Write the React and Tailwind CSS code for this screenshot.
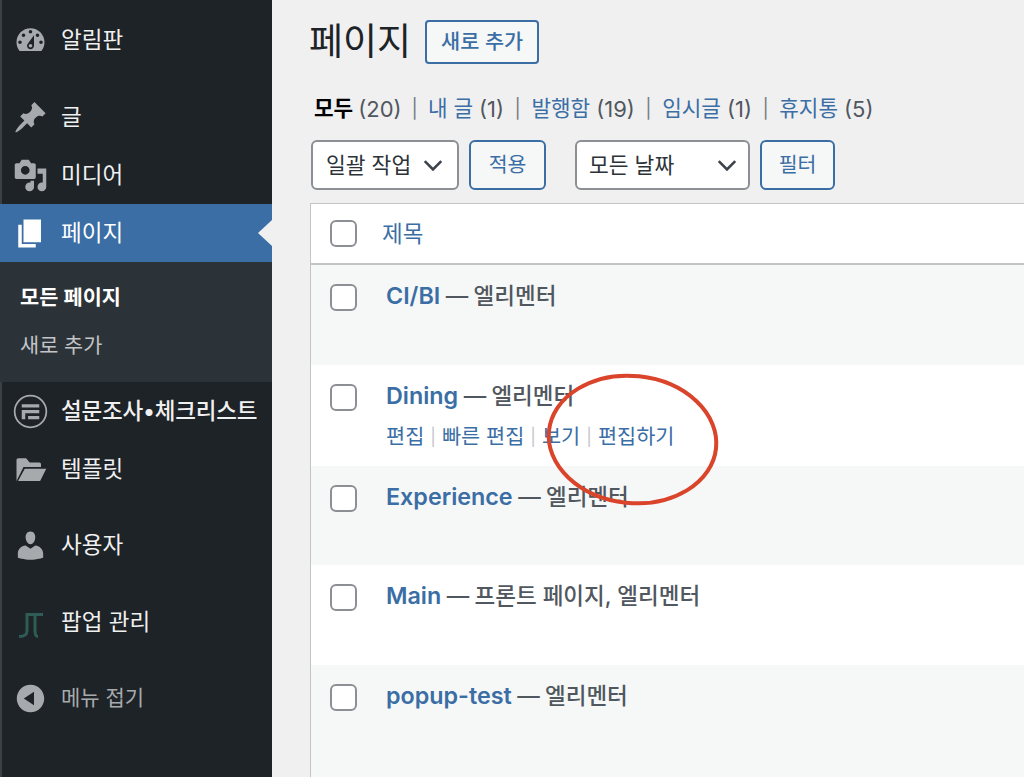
import React from "react";

const I = ({ d, cls = "" }) => (
  <svg viewBox="0 0 20 20" className={`w-[35px] h-[35px] shrink-0 ${cls}`} fill="currentColor">
    <path d={d} />
  </svg>
);

const icons = {
  dash: "M3.76 16h12.48c1.1-1.37 1.76-3.11 1.76-5 0-4.42-3.58-8-8-8s-8 3.58-8 8c0 1.89.66 3.63 1.76 5zM10 4c.55 0 1 .45 1 1s-.45 1-1 1-1-.45-1-1 .45-1 1-1zM6 6c.55 0 1 .45 1 1s-.45 1-1 1-1-.45-1-1 .45-1 1-1zm8 0c.55 0 1 .45 1 1s-.45 1-1 1-1-.45-1-1 .45-1 1-1zm-5.37 5.55L12 7v6c0 1.1-.9 2-2 2s-2-.9-2-2c0-.57.24-1.08.63-1.45zM4 10c.55 0 1 .45 1 1s-.45 1-1 1-1-.45-1-1 .45-1 1-1zm12 0c.55 0 1 .45 1 1s-.45 1-1 1-1-.45-1-1 .45-1 1-1zm-5 3c0-.55-.45-1-1-1s-1 .45-1 1 .45 1 1 1 1-.45 1-1z",
  pin: "M10.44 3.02l1.82-1.82 6.36 6.35-1.83 1.82c-1.05-.68-2.48-.57-3.41.36l-.75.75c-.92.93-1.04 2.35-.35 3.41l-1.83 1.82-2.41-2.41-2.8 2.79c-.42.42-3.38 2.71-3.8 2.29s1.86-3.39 2.28-3.81l2.79-2.79L4.1 9.36l1.83-1.82c1.05.69 2.48.57 3.4-.36l.75-.75c.93-.92 1.05-2.35.36-3.41z",
  media: "M13 11V4c0-.55-.45-1-1-1h-1.67L9 1H5L3.67 3H2c-.55 0-1 .45-1 1v7c0 .55.45 1 1 1h10c.55 0 1-.45 1-1zM7 4.5c1.38 0 2.5 1.12 2.5 2.5S8.38 9.5 7 9.5 4.5 8.38 4.5 7 5.62 4.5 7 4.5zM14 6h5v10.5c0 1.38-1.12 2.5-2.5 2.5S14 17.88 14 16.5s1.12-2.5 2.5-2.5c.17 0 .34.02.5.05V9h-3V6zm-4 8.05V13h2v3.5c0 1.38-1.12 2.5-2.5 2.5S7 17.88 7 16.5 8.12 14 9.5 14c.17 0 .34.02.5.05z",
  page: "M6 15V2h10v13H6zm-1 1h8v2H3V5h2v11z",
  folder: "M2 16.5V4.5c0-.55.45-1 1-1h4.5L9.5 6H15c.55 0 1 .45 1 1v1.5H6L2 16.5zM6.7 9.5H19L15.5 16.5H2.9L6.7 9.5z",
  user: "M10 9.25c-2.27 0-2.73-3.44-2.73-3.44C7 4.02 7.82 2 9.97 2c2.16 0 2.98 2.02 2.71 3.81 0 0-.41 3.44-2.68 3.44zm0 2.57L12.72 10c2.39 0 4.52 2.33 4.52 4.53v2.49s-3.65 1.13-7.24 1.13c-3.65 0-7.24-1.13-7.24-1.13v-2.49c0-2.25 1.94-4.48 4.47-4.48z",
  collapse: "M10 2.16c4.33 0 7.84 3.51 7.84 7.84s-3.51 7.84-7.84 7.84S2.16 14.33 2.16 10 5.67 2.16 10 2.16zM12 13.88V6.12L6.18 10z",
};

const Forminator = () => (
  <svg viewBox="0 0 36 36" className="w-[35px] h-[35px] shrink-0" fill="none" stroke="currentColor">
    <circle cx="18" cy="18" r="16.3" strokeWidth="1.8" />
    <path d="M9 10.5h18v3.4H9zM9 16.5h18v3.4H12.6V26H9zM15.5 22.5H27V26H15.5z" fill="currentColor" stroke="none" />
  </svg>
);

const JT = () => (
  <svg viewBox="0 0 35 35" className="w-[35px] h-[35px] shrink-0" fill="none" stroke="#2f5c57" strokeWidth="3">
    <path d="M6 31.500c5 0 8-1 8-6V9.500H30M22 9.500V25c0 4 1 6.500 3 6.500" />
  </svg>
);

const NavItem = ({ icon, children, mt = "", dim = false }) => (
  <div className={`flex items-center h-[58px] pl-[11px] ${mt} ${dim ? "text-[#a7aaad]" : "text-[#f0f0f1]"}`}>
    <div className="text-[#a7aaad] flex">{icon}</div>
    <span className={`ml-[13px] whitespace-nowrap ${dim ? "text-[21px]" : "text-[22.500px]"}`}>{children}</span>
  </div>
);

const Box = ({ cls = "" }) => (
  <span className={`block w-[27px] h-[27px] rounded-[6px] border-2 border-[#8c8f94] bg-white shrink-0 ${cls}`} />
);

const Row = ({ name, state, actions, white, h }) => (
  <div className={`flex pl-[19px] pt-[16px] ${h} ${white ? "bg-white" : "bg-[#f6f7f7]"}`}>
    <Box cls="mt-[3px]" />
    <div className="ml-[29px]">
      <div className="text-[22.500px] leading-[30px] whitespace-nowrap text-[#50575e] h-[30px]">
        <span className="font-semibold text-[#3a6ea5] text-[23.300px]">{name}</span>
        <span className="font-medium tracking-[-0.4px]"> — </span>
        <span className="font-medium">{state}</span>
      </div>
      {actions && (
        <div className="flex items-center mt-[13px] text-[20.800px] leading-[26px] text-[#3a6ea5] whitespace-nowrap">
          <span>편집</span>
          <span className="mx-[6px] text-[#c3c4c7] text-[17px]">|</span>
          <span>빠른 편집</span>
          <span className="mx-[6px] text-[#c3c4c7] text-[17px]">|</span>
          <span>보기</span>
          <span className="mx-[6px] text-[#c3c4c7] text-[17px]">|</span>
          <span>편집하기</span>
        </div>
      )}
    </div>
  </div>
);

const Chev = () => (
  <svg viewBox="0 0 20 20" className="w-[22px] h-[22px]" fill="none" stroke="#3c434a" strokeWidth="2.400">
    <path d="M2.500 6.500 10 14l7.500-7.500" />
  </svg>
);

const Sep = ({ cls = "mx-[10.500px]" }) => <span className={`text-[#787c82] text-[19px] ${cls}`}>|</span>;
const Count = ({ children, cls = "ml-[6px]" }) => <span className={`text-[#50575e] text-[22px] ${cls}`}>{children}</span>;

export default function App() {
  return (
    <div
      className="relative flex w-[1024px] h-[777px] overflow-hidden bg-[#f0f0f1]"
      style={{ fontFamily: '"Inter", "Noto Sans CJK KR", sans-serif' }}
    >
      {/* Sidebar */}
      <aside className="w-[272px] h-full shrink-0 bg-[#1d2327] border-l-2 border-[#3b4045] pt-[11px]">
        <NavItem icon={<I d={icons.dash} />}>알림판</NavItem>
        <NavItem icon={<I d={icons.pin} />} mt="mt-[19px]">글</NavItem>
        <NavItem icon={<I d={icons.media} />}>미디어</NavItem>
        <div className="relative flex items-center h-[58px] -ml-[2px] pl-[13px] bg-[#3a6ea5] text-white">
          <I d={icons.page} />
          <span className="ml-[13px] text-[22.500px]">페이지</span>
          <span className="absolute right-0 top-[16px] w-0 h-0 border-y-[13px] border-y-transparent border-r-[14px] border-r-[#f0f0f1]" />
        </div>
        <div className="h-[120px] bg-[#2c3338] pl-[20px] -ml-[2px] text-[20.800px] flex flex-col">
          <span className="mt-[21px] leading-[30px] font-semibold text-white">모든 페이지</span>
          <span className="mt-[18px] leading-[30px] text-[#c3c4c7]">새로 추가</span>
        </div>
        <NavItem icon={<Forminator />}>
          <span className="font-medium tracking-[-0.2px]">설문조사•체크리스트</span>
        </NavItem>
        <NavItem icon={<I d={icons.folder} />}>템플릿</NavItem>
        <NavItem icon={<I d={icons.user} />} mt="mt-[18px]">사용자</NavItem>
        <NavItem icon={<JT />} mt="mt-[19px]">팝업 관리</NavItem>
        <NavItem icon={<I d={icons.collapse} />} mt="mt-[18px]" dim>메뉴 접기</NavItem>
      </aside>

      {/* Main */}
      <main className="flex-1 min-w-0 h-full pl-[38px] flex flex-col">
        <div className="flex items-center shrink-0 h-[40px] mt-[22px]">
          <h1 className="-ml-[1px] text-[37px] leading-[40px] text-[#1d2327] font-normal">페이지</h1>
          <span className="ml-[14px] w-[114px] h-[44px] flex items-center justify-center rounded-[4px] border-2 border-[#3a6ea5] bg-[#f6f7f7] text-[#3a6ea5] text-[20.800px] font-medium">
            새로 추가
          </span>
        </div>

        <div className="flex items-center shrink-0 h-[30px] mt-[32px] ml-[4px] text-[21.300px] text-[#3a6ea5] whitespace-nowrap">
          <span className="font-bold text-black">모두</span>
          <Count cls="ml-[5px]">(20)</Count>
          <Sep cls="mx-[10px]" />
          <span>내 글</span>
          <Count>(1)</Count>
          <Sep />
          <span>발행함</span>
          <Count>(19)</Count>
          <Sep />
          <span>임시글</span>
          <Count>(1)</Count>
          <Sep />
          <span>휴지통</span>
          <Count>(5)</Count>
        </div>

        <div className="flex items-center shrink-0 mt-[16px] ml-[1px] h-[50px] text-[21.500px]">
          <div className="w-[148px] h-full flex items-center justify-between pl-[13px] pr-[13px] rounded-[6px] border-2 border-[#8c8f94] bg-white text-[#2c3338]">
            <span className="whitespace-nowrap">일괄 작업</span>
            <Chev />
          </div>
          <div className="ml-[10px] w-[77px] h-full flex items-center justify-center rounded-[6px] border-2 border-[#3a6ea5] bg-[#f6f7f7] text-[#3a6ea5] text-[20.500px]">적용</div>
          <div className="ml-[29px] w-[175px] h-full flex items-center justify-between pl-[12px] pr-[10px] rounded-[6px] border-2 border-[#8c8f94] bg-white text-[#2c3338]">
            <span className="whitespace-nowrap">모든 날짜</span>
            <Chev />
          </div>
          <div className="ml-[10px] w-[75px] h-full flex items-center justify-center rounded-[6px] border-2 border-[#3a6ea5] bg-[#f6f7f7] text-[#3a6ea5] text-[20.500px]">필터</div>
        </div>

        <div className="mt-[13px] -mr-[4px] border-t border-l border-[#c3c4c7] flex-1 min-h-0">
          <div className="flex items-center h-[61px] pl-[19px] bg-white border-b-2 border-[#c3c4c7]">
            <Box />
            <span className="ml-[25px] text-[#3a6ea5] text-[22.500px] leading-[30px] mt-[1px]">제목</span>
          </div>
          <Row name="CI/BI" state="엘리멘터" h="h-[100px]" />
          <Row name="Dining" state="엘리멘터" actions white h="h-[101px]" />
          <Row name="Experience" state="엘리멘터" h="h-[99px]" />
          <Row name="Main" state="프론트 페이지, 엘리멘터" white h="h-[100px]" />
          <Row name="popup-test" state="엘리멘터" h="h-[112px]" />
        </div>
      </main>

      {/* Hand-drawn annotation */}
      <svg className="absolute left-[540px] top-[368px] w-[186px] h-[144px] pointer-events-none" viewBox="0 0 186 144" fill="none">
        <ellipse cx="92.500" cy="71.500" rx="84" ry="63.500" stroke="#d9442b" strokeWidth="4" transform="rotate(6 92.500 71.500)" />
      </svg>
    </div>
  );
}
